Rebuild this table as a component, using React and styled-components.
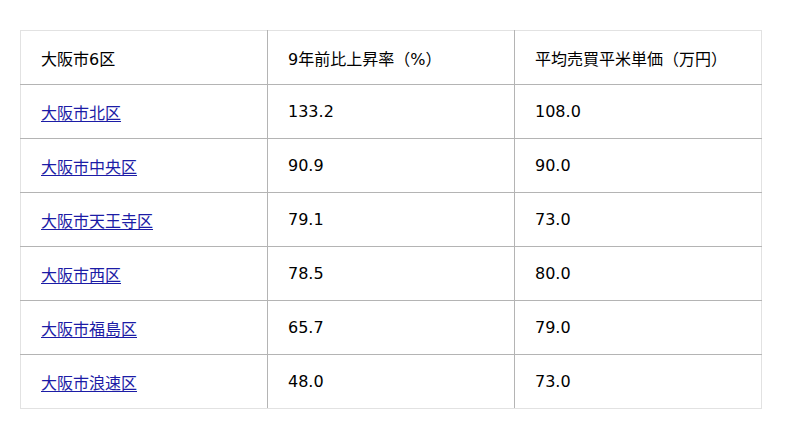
import React from "react";
import styled, { createGlobalStyle } from "styled-components";

const Global = createGlobalStyle`
  html, body { margin: 0; padding: 0; background: #fff; }
  body { font-family: "DejaVu Sans", "Noto Sans CJK JP", sans-serif; }
`;

const Page = styled.div`
  padding: 30px 38px 0 20px;
`;

const Table = styled.table`
  width: 742px;
  border-collapse: collapse;
  table-layout: fixed;
  border: 1px solid #e2e2e2;
`;

const Cell = styled.td`
  height: 54px;
  padding: 0 0 0 20px;
  box-sizing: border-box;
  font-size: 16px;
  color: #000;
  vertical-align: middle;
  border-right: 1px solid #b4b4b4;
  border-bottom: 1px solid #b4b4b4;
  &:last-child { border-right: 1px solid #e2e2e2; }
  tr:last-child > & { border-bottom: 1px solid #e2e2e2; }
`;

const Link = styled.a`
  color: #1c1ca6;
  text-decoration: underline;
  text-underline-offset: 2px;
`;

const rows = [
  ["大阪市北区", "133.2", "108.0"],
  ["大阪市中央区", "90.9", "90.0"],
  ["大阪市天王寺区", "79.1", "73.0"],
  ["大阪市西区", "78.5", "80.0"],
  ["大阪市福島区", "65.7", "79.0"],
  ["大阪市浪速区", "48.0", "73.0"],
];

export default function App() {
  return (
    <>
      <Global />
      <Page>
        <Table>
          <tbody>
            <tr>
              <Cell>大阪市6区</Cell>
              <Cell>9年前比上昇率（%）</Cell>
              <Cell>平均売買平米単価（万円）</Cell>
            </tr>
            {rows.map((r) => (
              <tr key={r[0]}>
                <Cell><Link href="#">{r[0]}</Link></Cell>
                <Cell>{r[1]}</Cell>
                <Cell>{r[2]}</Cell>
              </tr>
            ))}
          </tbody>
        </Table>
      </Page>
    </>
  );
}
